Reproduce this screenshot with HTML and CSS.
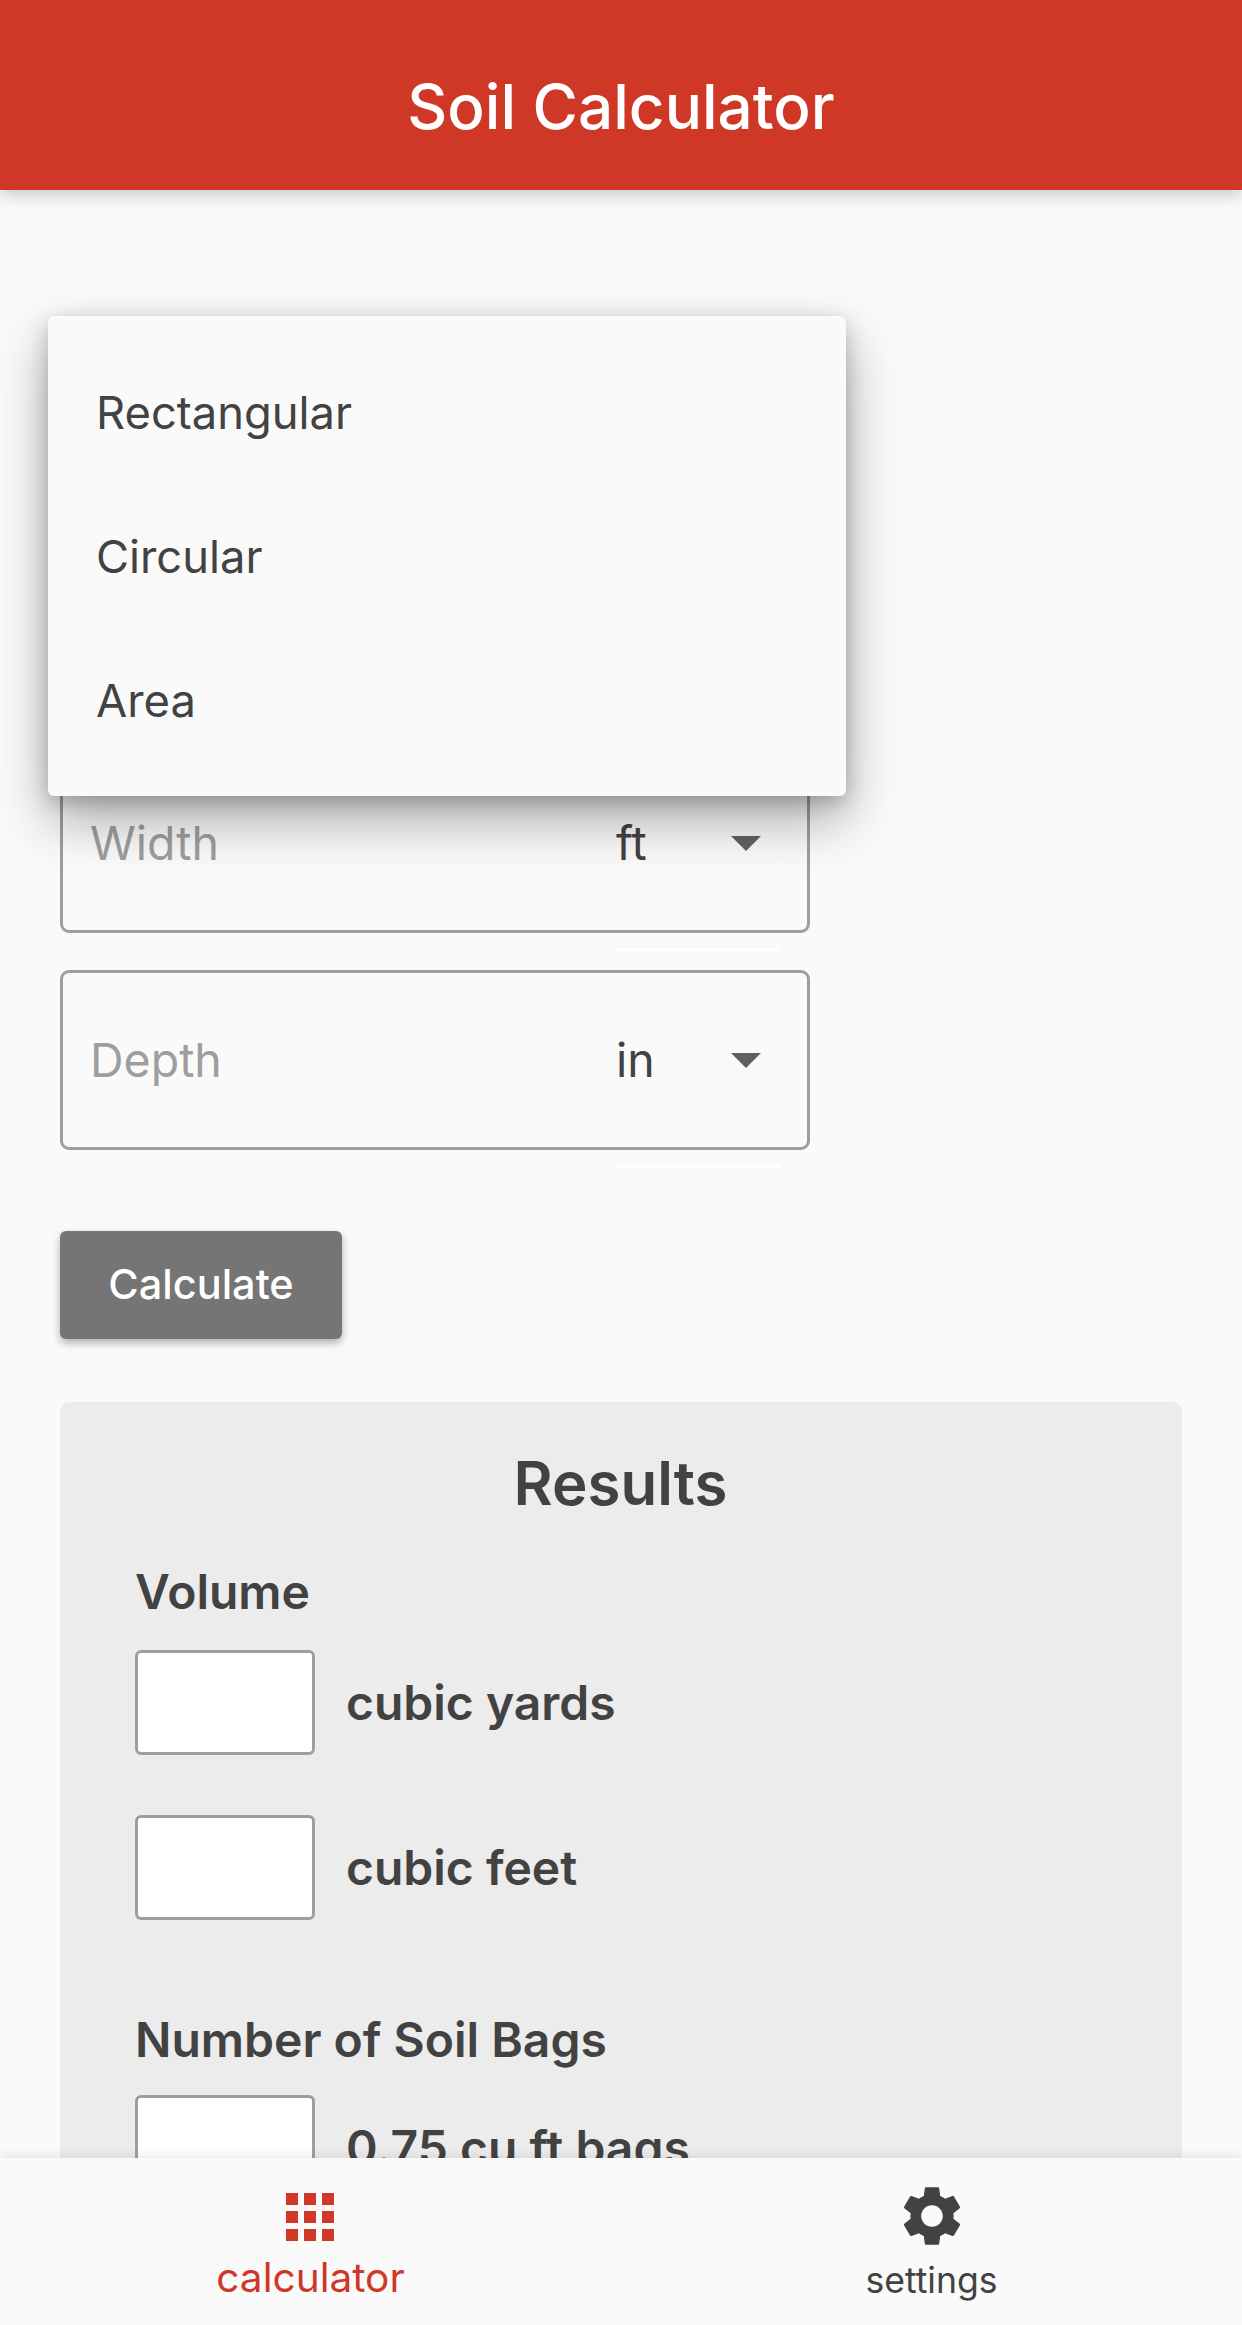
FILE: index.html
```html
<!DOCTYPE html>
<html lang="en">
<head>
<meta charset="utf-8">
<title>Soil Calculator</title>
<link rel="stylesheet" href="styles.css">
</head>
<body>
<div class="app">
  <header class="appbar"><h1>Soil Calculator</h1></header>
  <main class="content">
    <section class="form">
      <div class="field">
        <span class="placeholder">Width</span>
        <div class="unit"><span class="unit-value">ft</span>
          <svg class="arrow" viewBox="0 0 30 15"><path d="M0 0h30L15 15z"/></svg>
        </div>
      </div>
      <div class="field">
        <span class="placeholder">Depth</span>
        <div class="unit"><span class="unit-value">in</span>
          <svg class="arrow" viewBox="0 0 30 15"><path d="M0 0h30L15 15z"/></svg>
        </div>
      </div>
    </section>
    <button class="calc" type="button">Calculate</button>
    <section class="results">
      <h2>Results</h2>
      <h3 class="first">Volume</h3>
      <div class="row"><div class="box"></div><span>cubic yards</span></div>
      <div class="row"><div class="box"></div><span>cubic feet</span></div>
      <h3 class="second">Number of Soil Bags</h3>
      <div class="row"><div class="box"></div><span>0.75 cu ft bags</span></div>
    </section>
    <ul class="menu">
      <li>Rectangular</li>
      <li>Circular</li>
      <li>Area</li>
    </ul>
  </main>
  <nav class="tabs">
    <div class="tab active">
      <svg class="grid-icon" viewBox="0 0 49 49"><path d="M0 0h12v12H0zM18 0h12v12H18zM36 0h12v12H36zM0 18h12v12H0zM18 18h12v12H18zM36 18h12v12H36zM0 36h12v12H0zM18 36h12v12H18zM36 36h12v12H36z"/></svg>
      <span>calculator</span>
    </div>
    <div class="tab">
      <svg class="gear-icon" viewBox="0 0 24 24"><path d="M19.14 12.94c.04-.3.06-.61.06-.94 0-.32-.02-.64-.07-.94l2.03-1.58a.49.49 0 0 0 .12-.61l-1.92-3.32a.488.488 0 0 0-.59-.22l-2.39.96c-.5-.38-1.03-.7-1.62-.94l-.36-2.54a.484.484 0 0 0-.48-.41h-3.84c-.24 0-.43.17-.47.41l-.36 2.54c-.59.24-1.13.57-1.62.94l-2.39-.96c-.22-.08-.47 0-.59.22L2.74 8.87c-.12.21-.08.47.12.61l2.03 1.58c-.05.3-.09.63-.09.94s.02.64.07.94l-2.03 1.58a.49.49 0 0 0-.12.61l1.92 3.32c.12.22.37.29.59.22l2.39-.96c.5.38 1.03.7 1.62.94l.36 2.54c.05.24.24.41.48.41h3.84c.24 0 .44-.17.47-.41l.36-2.54c.59-.24 1.13-.56 1.62-.94l2.39.96c.22.08.47 0 .59-.22l1.92-3.32c.12-.22.07-.47-.12-.61l-2.01-1.58zM12 15.6c-1.98 0-3.6-1.62-3.6-3.6s1.62-3.6 3.6-3.6 3.6 1.62 3.6 3.6-1.62 3.6-3.6 3.6z"/></svg>
      <span>settings</span>
    </div>
  </nav>
</div>
</body>
</html>
```

FILE: styles.css
```css
* { box-sizing: border-box; }
html, body { margin: 0; padding: 0; }
body {
  font-family: Inter, "Noto Sans", sans-serif;
  color: #424242;
  background: #fafafa;
}
.app {
  width: 1242px;
  height: 2325px;
  display: flex;
  flex-direction: column;
  overflow: hidden;
}
.appbar {
  height: 190px;
  flex: none;
  background: #cf3727;
  display: flex;
  align-items: center;
  justify-content: center;
  box-shadow: 0 5px 16px rgba(0,0,0,.2);
  position: relative;
  z-index: 2;
}
.appbar h1 {
  margin: 0;
  color: #fff;
  font-size: 62px;
  font-weight: 500;
  line-height: 1;
  padding-top: 24px;
}
.content {
  flex: 1;
  min-height: 0;
  position: relative;
  overflow: hidden;
  padding: 563px 60px 0;
}
.form { width: 750px; display: flex; flex-direction: column; gap: 37px; }
.field {
  height: 180px;
  border: 3px solid #9e9e9e;
  border-radius: 9px;
  display: flex;
  align-items: center;
  justify-content: space-between;
  padding: 0 46px 0 27px;
  position: relative;
  font-size: 46.5px;
}
.placeholder { color: #9e9e9e; }
.unit { display: flex; align-items: center; width: 145px; justify-content: space-between; }
.unit-value { color: #424242; }
.unit::after {
  content: "";
  position: absolute;
  left: 553px;
  width: 164px;
  bottom: -21px;
  height: 3px;
  background: #fff;
}
.arrow { width: 30px; height: 15px; fill: #616161; }
.calc {
  display: block;
  margin: 81px 0 0;
  width: 282px;
  height: 108px;
  border: 0;
  border-radius: 6px;
  background: #757575;
  color: #fff;
  font: 500 41.5px Inter, "Noto Sans", sans-serif;
  padding: 0 0 3px;
  box-shadow: 0 4px 8px rgba(0,0,0,.3);
}
.results {
  margin-top: 63px;
  width: 1122px;
  background: #ececec;
  border-radius: 9px;
  padding: 46px 76px 60px 75px;
  height: 900px;
}
.results h2 {
  margin: 0;
  text-align: center;
  font-size: 60px;
  font-weight: 600;
  line-height: 70px;
}
.results h3 { margin: 0; font-size: 48px; font-weight: 600; line-height: 60px; }
.results h3.first { margin-top: 44px; }
.results h3.second { margin-top: 90px; }
.row { display: flex; align-items: center; gap: 31px; margin-top: 28px; font-size: 48px; font-weight: 600; }
.row + .row { margin-top: 60px; }
.second + .row { margin-top: 25px; }
.box {
  width: 180px;
  height: 105px;
  background: #fff;
  border: 3px solid #9e9e9e;
  border-radius: 6px;
}
.menu {
  position: absolute;
  left: 48px;
  top: 126px;
  width: 798px;
  margin: 0;
  padding: 24px 0;
  list-style: none;
  background: #fafafa;
  border-radius: 6px;
  box-shadow: 0 24px 54px rgba(0,0,0,.32), 0 6px 20px rgba(0,0,0,.2);
  font-size: 45.3px;
}
.menu li { height: 144px; display: flex; align-items: center; padding-left: 48px; }
.tabs {
  height: 167px;
  flex: none;
  background: #fafafa;
  display: flex;
  box-shadow: 0 -3px 9px rgba(0,0,0,.08);
  position: relative;
  z-index: 2;
}
.tab {
  flex: 1;
  display: flex;
  flex-direction: column;
  align-items: center;
  gap: 7px;
  padding-top: 29px;
  font-size: 35.6px;
  color: #424242;
}
.tab.active { color: #cf3727; font-size: 40.6px; padding-top: 35px; gap: 11px; }
.grid-icon { width: 49px; height: 49px; fill: #cf3727; display: block; }
.gear-icon { width: 72px; height: 72px; fill: #424242; display: block; margin-top: -7px; }
```
